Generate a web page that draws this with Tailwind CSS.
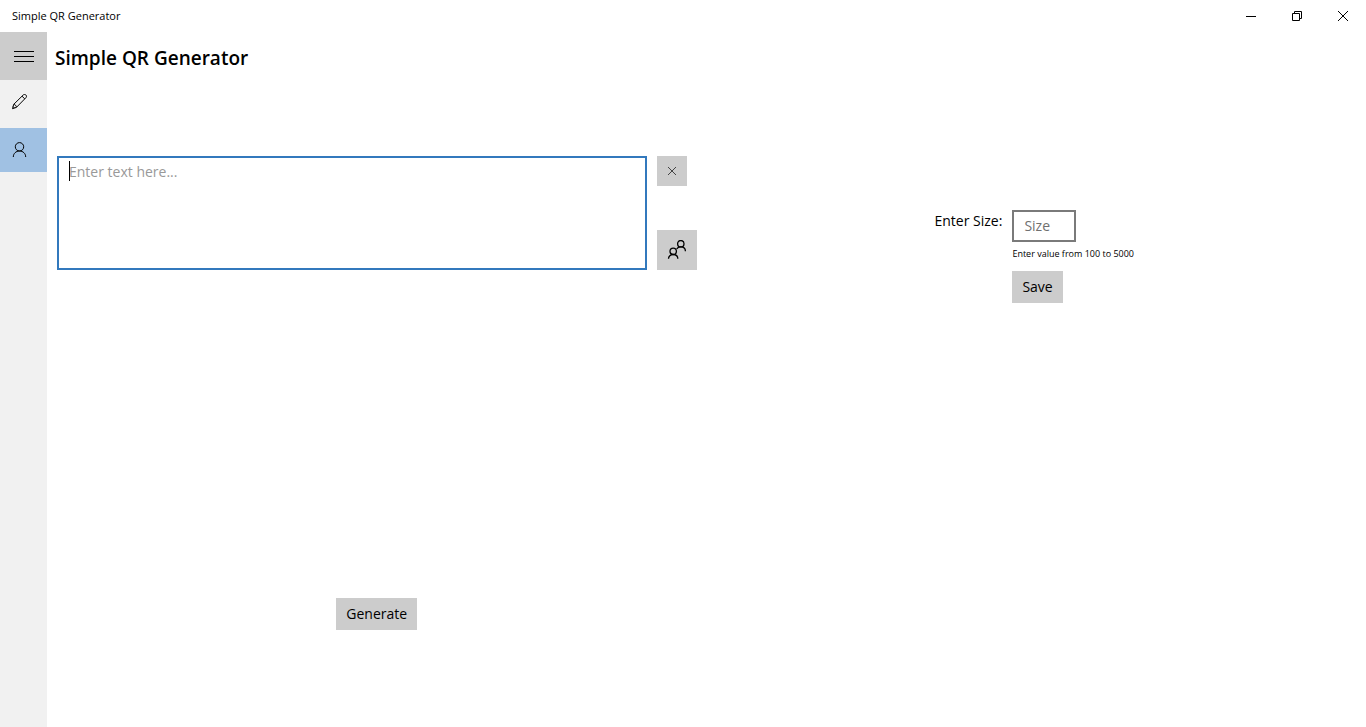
<!DOCTYPE html>
<html lang="en">
<head>
    <meta charset="UTF-8">
    <meta name="viewport" content="width=device-width, initial-scale=1.0">
    <title>Simple QR Generator</title>
    <script src="https://cdn.jsdelivr.net/npm/@tailwindcss/browser@4"></script>
</head>
<body class="min-h-screen flex flex-col bg-white text-black text-sm font-['Open_Sans',sans-serif]">
    <!-- Title bar -->
    <header class="h-8 flex items-center justify-between">
        <span class="pl-3 text-[11px] leading-4">Simple QR Generator</span>
        <div class="flex h-8">
            <button type="button" aria-label="Minimize" class="w-[46px] flex items-center justify-center">
                <svg class="w-[10px] h-[10px]" viewBox="0 0 10 10" fill="none" stroke="currentColor"><path d="M0 5.5h10"/></svg>
            </button>
            <button type="button" aria-label="Restore" class="w-[46px] flex items-center justify-center">
                <svg class="w-[10px] h-[10px]" viewBox="0 0 10 10" fill="none" stroke="currentColor"><path d="M.5 2.5h7v7h-7zM2.5 2.5v-2h7v7h-2"/></svg>
            </button>
            <button type="button" aria-label="Close" class="w-[46px] flex items-center justify-center">
                <svg class="w-[10px] h-[10px]" viewBox="0 0 10 10" fill="none" stroke="currentColor"><path d="M0 0l10 10M10 0L0 10"/></svg>
            </button>
        </div>
    </header>

    <div class="flex-1 flex">
        <!-- Sidebar -->
        <nav class="w-[47px] shrink-0 bg-[#f1f1f1]">
            <button type="button" aria-label="Menu" class="w-full h-12 bg-[#cccccc] flex items-center pl-[14px]">
                <svg class="w-5 h-4" viewBox="0 0 20 16" fill="none" stroke="currentColor"><path d="M0 3.5h20M0 8.5h20M0 13.5h20"/></svg>
            </button>
            <button type="button" aria-label="Edit" class="w-full h-11 mb-1 flex items-center pl-3">
                <svg class="w-4 h-4" viewBox="0 0 16 16" fill="none" stroke="currentColor" stroke-linejoin="round"><path d="M.5 14.7l1.2-4.3L11.2 1c.8-.7 1.9-.7 2.7 0s.8 1.9 0 2.7l-9.4 9.6zM10 2.2l2.8 2.7M1.7 10.4c1.5.1 2.7 1.4 2.8 2.9M1.1 12.6l1.5 1.5"/></svg>
            </button>
            <button type="button" aria-label="Contact" class="w-full h-11 bg-[#a0c1e3] flex items-center pl-3">
                <svg class="w-4 h-4" viewBox="0 0 16 16" fill="none" stroke="currentColor"><circle cx="7.5" cy="4.8" r="4.2"/><path d="M1.3 15c0-3.4 2.6-6 6.2-6s6.2 2.6 6.2 6"/></svg>
            </button>
        </nav>

        <main class="flex-1 flex flex-col">
            <h1 class="h-[52px] pl-2 text-[19px] leading-[52px] font-semibold">Simple QR Generator</h1>

            <div class="flex-1 grid grid-cols-2">
                <!-- Text to encode -->
                <section class="flex flex-col justify-between px-[10px] pt-[72px] pb-[97px]">
                    <div class="flex gap-[10px]">
                        <div class="relative flex-1">
                            <textarea aria-label="Text" placeholder="Enter text here..." class="block w-full h-[114px] resize-none border-2 border-[#3279bd] px-[10px] py-1 leading-5 outline-none placeholder:text-[#999999]"></textarea>
                            <span class="absolute left-3 top-[5px] w-px h-5 bg-black"></span>
                        </div>
                        <div class="w-10 flex flex-col justify-between items-start">
                            <button type="button" aria-label="Clear" class="w-[30px] h-[30px] bg-[#cccccc] flex items-center justify-center">
                                <svg class="w-2 h-2" viewBox="0 0 8 8" fill="none" stroke="#444444"><path d="M0 0l8 8M8 0L0 8"/></svg>
                            </button>
                            <button type="button" aria-label="Choose contact" class="w-10 h-10 bg-[#cccccc] flex items-center justify-center">
                                <svg class="w-5 h-5" viewBox="0 0 20 20" fill="none" stroke="currentColor" stroke-width="1.3"><circle cx="13.8" cy="3.7" r="3.2"/><circle cx="6.2" cy="11.3" r="3.2"/><path d="M1.5 18.8c0-2.6 2-4.3 4.7-4.3s4.6 1.7 4.6 4.3M9.7 9c.8-1.4 2.3-2.1 4.1-2.1 2.7 0 4.6 1.7 4.6 4.3"/></svg>
                            </button>
                        </div>
                    </div>
                    <button type="button" class="self-center h-8 px-[10px] bg-[#cccccc]">Generate</button>
                </section>

                <!-- Output size -->
                <section class="flex justify-center items-start gap-[10px] pt-[126px] pr-1">
                    <label for="size" class="leading-[22px]">Enter Size:</label>
                    <div class="flex flex-col items-start">
                        <input id="size" type="text" placeholder="Size" class="w-16 h-8 border-2 border-[#7a7a7a] px-[10px] pb-px outline-none placeholder:text-[#707070]">
                        <p class="pt-1 pb-[9px] text-[9px] leading-4">Enter value from 100 to 5000</p>
                        <button type="button" class="h-8 px-[10px] bg-[#cccccc]">Save</button>
                    </div>
                </section>
            </div>
        </main>
    </div>
</body>
</html>
